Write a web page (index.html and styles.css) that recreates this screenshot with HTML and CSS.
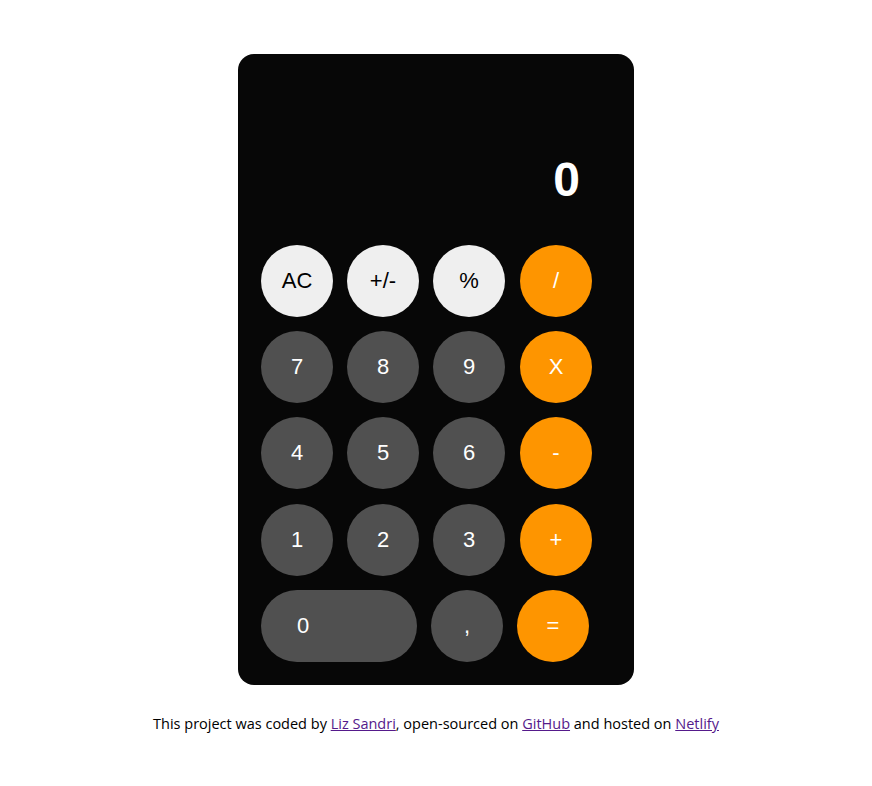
FILE: index.html
```html
<!DOCTYPE html>
<html lang="en">
<head>
<meta charset="utf-8">
<title>Calculator</title>
<link rel="stylesheet" href="styles.css">
</head>
<body>
<main class="page">
  <div class="calculator">
    <div class="display">0</div>
    <div class="keys">
      <div class="row">
        <button class="key light">AC</button>
        <button class="key light">+/-</button>
        <button class="key light">%</button>
        <button class="key orange op">/</button>
      </div>
      <div class="row">
        <button class="key dark">7</button>
        <button class="key dark">8</button>
        <button class="key dark">9</button>
        <button class="key orange op">X</button>
      </div>
      <div class="row">
        <button class="key dark">4</button>
        <button class="key dark">5</button>
        <button class="key dark">6</button>
        <button class="key orange op">-</button>
      </div>
      <div class="row shifted">
        <button class="key dark">1</button>
        <button class="key dark">2</button>
        <button class="key dark">3</button>
        <button class="key orange op">+</button>
      </div>
      <div class="row">
        <button class="key dark zero">0</button>
        <button class="key dark">,</button>
        <button class="key orange">=</button>
      </div>
    </div>
  </div>
  <footer class="footer">
    This project was coded by <a href="#">Liz Sandri</a>, open-sourced on <a href="#">GitHub</a> and hosted on <a href="#">Netlify</a>
  </footer>
</main>
</body>
</html>
```
FILE: styles.css
```css
html, body {
  margin: 0;
  padding: 0;
  background: #ffffff;
}

.page {
  display: flex;
  flex-direction: column;
  align-items: center;
  padding-top: 54px;
}

.calculator {
  width: 396px;
  height: 631px;
  box-sizing: border-box;
  background: #070707;
  border-radius: 16px;
  padding: 0 23px;
  display: flex;
  flex-direction: column;
}

.display {
  height: 191px;
  box-sizing: border-box;
  padding-top: 98px;
  padding-right: 31px;
  text-align: right;
  color: #ffffff;
  font-family: "Liberation Sans", Arial, sans-serif;
  font-weight: bold;
  font-size: 48px;
  line-height: 55px;
}

.keys {
  display: flex;
  flex-direction: column;
  gap: 14px;
}

.row {
  display: flex;
  gap: 14px;
}

.row.shifted {
  margin-top: 1px;
}

.key {
  width: 72px;
  height: 72px;
  border: none;
  border-radius: 36px;
  padding: 0;
  margin: 0;
  font-family: "Liberation Sans", Arial, sans-serif;
  font-size: 22px;
  display: flex;
  align-items: center;
  justify-content: center;
  cursor: pointer;
}

.key.op {
  margin-left: 1px;
}

.light {
  background: #efefef;
  color: #000000;
}

.dark {
  background: #505050;
  color: #ffffff;
}

.orange {
  background: #fe9500;
  color: #ffffff;
}

.zero {
  width: 156px;
  justify-content: flex-start;
  padding-left: 36px;
}

.footer {
  margin-top: 29px;
  font-family: "Open Sans", "DejaVu Sans", sans-serif;
  font-size: 14.5px;
  color: #000000;
  text-align: center;
}

.footer a {
  color: #551a8b;
}
```
